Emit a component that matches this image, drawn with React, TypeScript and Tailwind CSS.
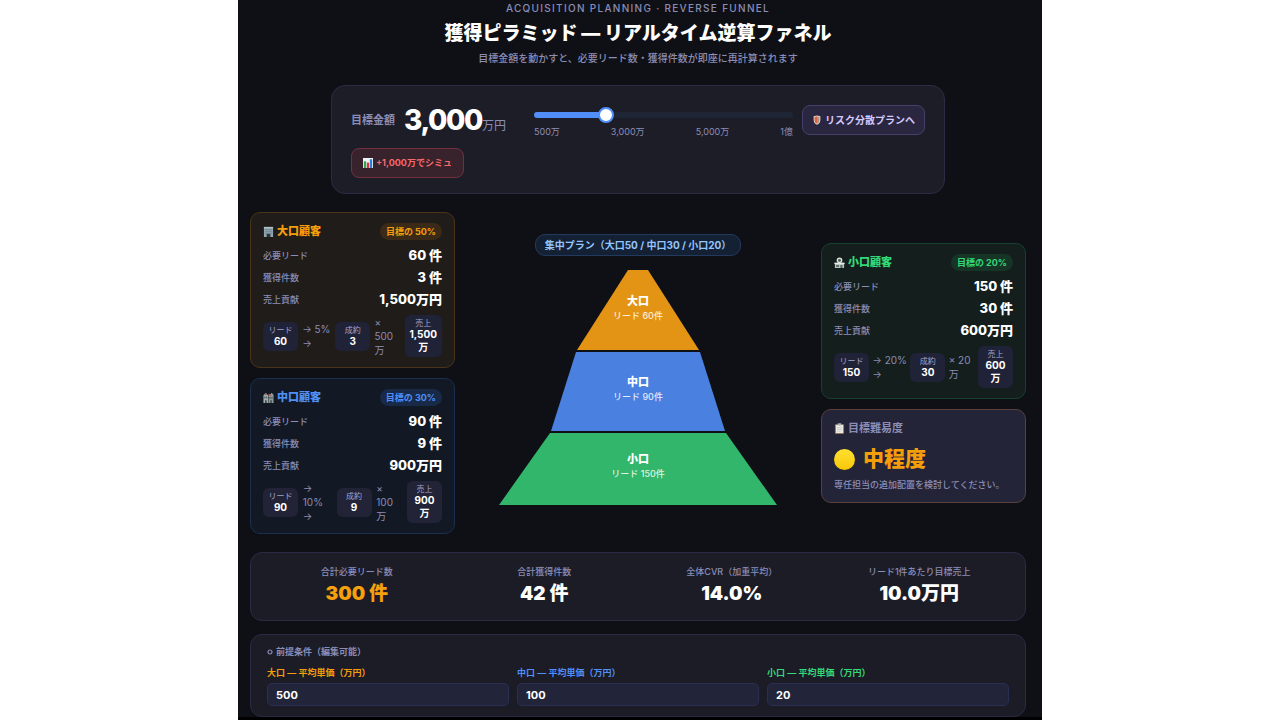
import { useState } from "react";
import type { ReactNode } from "react";

type Segment = {
  id: "large" | "mid" | "small";
  name: string;
  share: number;
  cvr: number;
  card: string;
  text: string;
  badge: string;
  chip: string;
  icon: ReactNode;
};

const BuildingIcon = () => (
  <svg viewBox="0 0 12 12" className="size-[11px] shrink-0" aria-hidden="true">
    <rect x="1" y="1" width="10" height="11" fill="#8fa3ae" />
    <rect x="1" y="1" width="10" height="1.5" fill="#b4c2c9" />
    <g fill="#748a96">
      <rect x="2.2" y="3.4" width="7.6" height="1" />
      <rect x="2.2" y="5.4" width="7.6" height="1" />
      <rect x="2.2" y="7.4" width="7.6" height="1" />
    </g>
    <rect x="4" y="8.6" width="4" height="3.4" fill="#2c343a" />
  </svg>
);

const OfficesIcon = () => (
  <svg viewBox="0 0 12 12" className="size-[11px] shrink-0" aria-hidden="true">
    <path d="M.5 3.5 3 1l2.5 2.5V12h-5z" fill="#a3aeb0" />
    <path d="M6 2.5h2L9.5.8 11.5 3v9H6z" fill="#8b9997" />
    <rect x="2" y="1.6" width="1.8" height="1.8" fill="#c6503f" />
    <rect x="7.2" y="3" width="1.4" height="1.4" fill="#c6503f" />
    <g fill="#3d4a4c">
      <rect x="1.5" y="5" width="1.1" height="2" />
      <rect x="3.5" y="5" width="1.1" height="2" />
      <rect x="7" y="5.5" width="1.1" height="1.8" />
      <rect x="9.2" y="5.5" width="1.1" height="1.8" />
      <rect x="2.2" y="9" width="1.8" height="3" />
      <rect x="8" y="9" width="1.6" height="3" />
    </g>
  </svg>
);

const ShopIcon = () => (
  <svg viewBox="0 0 12 12" className="size-[11px] shrink-0" aria-hidden="true">
    <circle cx="6" cy="3.6" r="3.1" fill="#d8dedb" />
    <circle cx="6" cy="3.8" r="1.5" fill="#3d5a4a" />
    <path d="M1 6.4h10V12H1z" fill="#b9c2be" />
    <path d="M.4 6.2h11.2v1.6H.4z" fill="#e6eae8" />
    <rect x="2.4" y="8.8" width="3" height="2" fill="#4f6a5c" />
    <rect x="7" y="8.8" width="2.2" height="3.2" fill="#4f6a5c" />
  </svg>
);

const ChartIcon = () => (
  <svg viewBox="0 0 12 12" className="size-[10px] shrink-0" aria-hidden="true">
    <rect width="12" height="12" fill="#eef2f5" />
    <rect x="1" y="4" width="2.8" height="8" fill="#2fa84f" />
    <rect x="4.6" y="5.5" width="2.8" height="6.5" fill="#d9363e" />
    <rect x="8.2" y="1.5" width="2.8" height="10.5" fill="#2f7fd6" />
  </svg>
);

const ShieldIcon = () => (
  <svg viewBox="0 0 12 12" className="size-[10px] shrink-0" aria-hidden="true">
    <path d="M6 .5 10 1.500v4.500c0 3-1.800 4.800-4 5.700C3.800 10.800 2 9 2 6V1.500z" fill="#e9dfd8" />
    <path d="M6 1.600v9C4.200 9.800 3 8.300 3 6V2.400z" fill="#e0623a" />
    <path d="M6 1.600v9c1.800-.8 3-2.300 3-4.600V2.400z" fill="#a8948c" />
  </svg>
);

const ClipboardIcon = () => (
  <svg viewBox="0 0 12 12" className="size-[11px] shrink-0" aria-hidden="true">
    <rect x="1" y="1" width="10" height="11" rx="1" fill="#8a6a4e" />
    <rect x="2" y="2.2" width="8" height="8.8" fill="#eceae6" />
    <rect x="4" y=".2" width="4" height="2.4" rx=".6" fill="#a9b0b6" />
    <path d="M3.2 5h5.6M3.2 7h5.6M3.2 9h4" stroke="#b9b6b0" strokeWidth=".6" />
  </svg>
);

const SEGMENTS: Segment[] = [
  {
    id: "large",
    name: "大口",
    share: 50,
    cvr: 5,
    card: "border-[#4a3418] bg-[#1f1c19]",
    text: "text-[#f59e0b]",
    badge: "bg-[#3a2a17] text-[#f59e0b]",
    chip: "bg-[#202238]",
    icon: <BuildingIcon />,
  },
  {
    id: "mid",
    name: "中口",
    share: 30,
    cvr: 10,
    card: "border-[#1a2f4d] bg-[#131924]",
    text: "text-[#4f8ff7]",
    badge: "bg-[#182a47] text-[#4f8ff7]",
    chip: "bg-[#222336]",
    icon: <OfficesIcon />,
  },
  {
    id: "small",
    name: "小口",
    share: 20,
    cvr: 20,
    card: "border-[#174030] bg-[#141e1c]",
    text: "text-[#34d977]",
    badge: "bg-[#173527] text-[#34d977]",
    chip: "bg-[#202238]",
    icon: <ShopIcon />,
  },
];

const fmt = (n: number) => Math.round(n).toLocaleString("en-US");

function Chip({ label, value, tone }: { label: string; value: string; tone: string }) {
  return (
    <div className={`min-w-[35px] shrink-0 rounded-md px-[5px] py-[3px] text-center ${tone}`}>
      <div className="text-[8px] leading-[10px] text-[#a3a5cc]">{label}</div>
      <div className="text-[10px] leading-[13px] font-bold whitespace-pre-line text-white">{value}</div>
    </div>
  );
}

function SegmentCard({ seg, goal, price }: { seg: Segment; goal: number; price: number }) {
  const sales = (goal * seg.share) / 100;
  const deals = Math.ceil(sales / price);
  const leads = Math.ceil((deals * 100) / seg.cvr);
  const rows = [
    ["必要リード", `${fmt(leads)} 件`],
    ["獲得件数", `${fmt(deals)} 件`],
    ["売上貢献", `${fmt(sales)}万円`],
  ];
  // the mid card stacks its arrows around the rate
  const rate = seg.id === "mid" ? `→\n${seg.cvr}%\n→` : `→ ${seg.cvr}%\n→`;
  const unit = seg.id === "small" ? `× ${price}\n万` : `×\n${price}\n万`;

  return (
    <section className={`rounded-[10px] border px-3 pt-[9px] pb-[10px] ${seg.card}`}>
      <div className="flex h-[18px] items-center justify-between">
        <h2 className={`flex items-center gap-[3px] text-[11px] font-black ${seg.text}`}>
          {seg.icon}
          {seg.name}顧客
        </h2>
        <span className={`rounded-full px-[6px] text-[9px] leading-[17px] font-bold ${seg.badge}`}>
          目標の {seg.share}%
        </span>
      </div>
      <dl className="mt-[5px] mb-1">
        {rows.map(([k, v]) => (
          <div key={k} className="flex h-[22px] items-center justify-between">
            <dt className="text-[9px] font-medium text-[#8b8db6]">{k}</dt>
            <dd className="text-[13px] font-extrabold text-white">{v}</dd>
          </div>
        ))}
      </dl>
      <div className="flex h-[42px] items-center justify-between text-[10px] leading-[14px] text-[#8b8db6]">
        <Chip label="リード" value={fmt(leads)} tone={seg.chip} />
        <span className="min-w-[29px] whitespace-pre-line">{rate}</span>
        <Chip label="成約" value={fmt(deals)} tone={seg.chip} />
        <span className="min-w-[26px] whitespace-pre-line">{unit}</span>
        <Chip label="売上" value={`${fmt(sales)}\n万`} tone={seg.chip} />
      </div>
    </section>
  );
}

function Pyramid({ leads }: { leads: number[] }) {
  return (
    <svg viewBox="0 0 278 235" className="w-full max-w-[278px]" role="img" aria-label="獲得ピラミッド">
      <polygon points="129,0 149,0 200,80 78,80" fill="#e39414" />
      <polygon points="77,82 201,82 226,161 52,161" fill="#4a80df" />
      <polygon points="51,163 227,163 278,235 0,235" fill="#31b66b" />
      <g fill="#fff" textAnchor="middle">
        <g className="text-[11px] font-black">
          <text x="139" y="35">大口</text>
          <text x="139" y="116">中口</text>
          <text x="139" y="193">小口</text>
        </g>
        <g className="text-[9px] font-medium" fillOpacity="0.85">
          <text x="139" y="49">リード {leads[0]}件</text>
          <text x="139" y="130">リード {leads[1]}件</text>
          <text x="139" y="207">リード {leads[2]}件</text>
        </g>
      </g>
    </svg>
  );
}

export default function App() {
  const [goal, setGoal] = useState(3000);
  const [prices, setPrices] = useState([500, 100, 20]);

  const deals = SEGMENTS.map((s, i) => Math.ceil((goal * s.share) / 100 / (prices[i] || 1)));
  const leads = SEGMENTS.map((s, i) => Math.ceil((deals[i] * 100) / s.cvr));
  const totalLeads = leads.reduce((a, b) => a + b, 0);
  const totalDeals = deals.reduce((a, b) => a + b, 0);
  const pct = ((goal - 500) / 9500) * 100;

  const card = (i: number) => <SegmentCard seg={SEGMENTS[i]} goal={goal} price={prices[i] || 1} />;

  const totals = [
    { label: "合計必要リード数", value: `${fmt(totalLeads)} 件`, tone: "text-[#f5a00c]" },
    { label: "合計獲得件数", value: `${fmt(totalDeals)} 件`, tone: "text-white" },
    { label: "全体CVR（加重平均）", value: `${((totalDeals / totalLeads) * 100).toFixed(1)}%`, tone: "text-white" },
    { label: "リード1件あたり目標売上", value: `${(goal / totalLeads).toFixed(1)}万円`, tone: "text-white" },
  ];

  return (
    <div className="min-h-screen bg-white font-[Inter,'Noto_Sans_CJK_JP',sans-serif]">
      <main className="mx-auto min-h-screen max-w-[804px] bg-black">
        <div className="bg-[#0f1015] pr-4 pl-3">
          <header className="text-center">
            <p className="text-[10px] leading-4 font-medium tracking-[0.13em] text-[#8b8db6]">
              ACQUISITION PLANNING · REVERSE FUNNEL
            </p>
            <h1 className="mt-1 text-[19px] leading-7 font-black text-white">
              獲得ピラミッド — リアルタイム逆算ファネル
            </h1>
            <p className="mt-[2px] text-[10px] leading-4 font-medium text-[#8b8db6]">
              目標金額を動かすと、必要リード数・獲得件数が即座に再計算されます
            </p>
          </header>

          <section className="mx-auto mt-[19px] flex max-w-[614px] flex-wrap items-center gap-x-[9px] gap-y-[10px] rounded-[14px] border border-[#2b2b45] bg-[#1d1d28] px-[19px] pt-4 pb-[15px]">
            <label htmlFor="goal" className="text-[11px] font-semibold text-[#8b8db6]">
              目標金額
            </label>
            <p className="flex h-9 min-w-[121px] items-baseline text-[28px] leading-9 font-extrabold tracking-tighter text-white">
              {fmt(goal)}
              <span className="text-[12px] font-normal tracking-normal text-[#8b8db6]">万円</span>
            </p>
            <div className="min-w-[200px] flex-1 pt-[10px]">
              <input
                id="goal"
                type="range"
                min={500}
                max={10000}
                step={100}
                value={goal}
                onChange={(e) => setGoal(Number(e.target.value))}
                className="block h-[6px] w-full cursor-pointer appearance-none rounded-full [&::-webkit-slider-thumb]:size-4 [&::-webkit-slider-thumb]:appearance-none [&::-webkit-slider-thumb]:rounded-full [&::-webkit-slider-thumb]:border-2 [&::-webkit-slider-thumb]:border-[#4f8ff7] [&::-webkit-slider-thumb]:bg-white"
                style={{ background: `linear-gradient(to right, #4f8ff7 ${pct}%, #1e2636 ${pct}%)` }}
              />
              <div className="mt-2 flex justify-between text-[9px] leading-3 text-[#8b8db6]">
                <span>500万</span>
                <span>3,000万</span>
                <span>5,000万</span>
                <span>1億</span>
              </div>
            </div>
            <button
              type="button"
              className="flex h-[30px] items-center gap-[3px] rounded-lg border border-[#45406b] bg-[#2a2640] px-[9px] text-[10px] font-bold text-[#d5c8fb]"
            >
              <ShieldIcon />
              リスク分散プランへ
            </button>
            <button
              type="button"
              onClick={() => setGoal((g) => Math.min(10000, g + 1000))}
              className="flex h-[30px] items-center gap-[3px] rounded-lg border border-[#70313c] bg-[#38222c] px-[11px] text-[9px] font-bold text-[#f8696b]"
            >
              <ChartIcon />
              +1,000万でシミュ
            </button>
          </section>

          <div className="mt-[18px] grid grid-cols-[205px_1fr_205px] items-center">
            <div className="flex flex-col gap-[10px]">
              {card(0)}
              {card(1)}
            </div>

            <div className="flex flex-col items-center gap-[14px] pb-2">
              <p className="rounded-[10px] border border-[#213a5e] bg-[#142033] px-[9px] text-[10px] leading-5 font-bold text-[#93c5fd]">
                集中プラン（大口50 / 中口30 / 小口20）
              </p>
              <Pyramid leads={leads} />
            </div>

            <div className="flex flex-col gap-[10px]">
              {card(2)}
              <section className="rounded-[10px] border border-[#5a4038] bg-[#232438] px-3 py-[9px]">
                <h2 className="flex h-[18px] items-center gap-[3px] text-[11px] font-semibold text-[#8b8db6]">
                  <ClipboardIcon />
                  目標難易度
                </h2>
                <p className="mt-2 flex items-center gap-2 text-[21px] leading-7 font-black text-[#f59e0b]">
                  <span className="size-[21px] rounded-full bg-linear-to-b from-[#ffe02e] to-[#f7c800]" />
                  中程度
                </p>
                <p className="mt-1 text-[9px] leading-4 font-medium text-[#8b8db6]">
                  専任担当の追加配置を検討してください。
                </p>
              </section>
            </div>
          </div>

          <dl className="mt-[18px] flex rounded-[12px] border border-[#292b45] bg-[#1c1c27] px-3 pt-[11px] pb-3 text-center">
            {totals.map((t) => (
              <div key={t.label} className="flex-1">
                <dt className="text-[9px] leading-4 font-medium text-[#8b8db6]">{t.label}</dt>
                <dd className={`text-[19px] leading-7 font-black ${t.tone}`}>{t.value}</dd>
              </div>
            ))}
          </dl>

          <section className="mt-[13px] rounded-[12px] border border-[#292b45] bg-[#1c1c27] px-4 pt-[9px] pb-[10px]">
            <h2 className="flex items-center gap-[3px] text-[9px] leading-4 font-bold text-[#8b8db6]">
              <svg viewBox="0 0 6 6" className="size-[6px]" aria-hidden="true">
                <circle cx="3" cy="3" r="2" fill="none" stroke="#8b8db6" strokeWidth="1.2" />
              </svg>
              前提条件（編集可能）
            </h2>
            <div className="mt-[6px] grid grid-cols-3 gap-2">
              {SEGMENTS.map((s, i) => (
                <label key={s.id} className={`block text-[9px] leading-[14px] font-semibold ${s.text}`}>
                  {s.name} — 平均単価（万円）
                  <input
                    type="text"
                    inputMode="numeric"
                    value={prices[i]}
                    onChange={(e) => {
                      const next = [...prices];
                      next[i] = Number(e.target.value) || 0;
                      setPrices(next);
                    }}
                    className="mt-[3px] block h-[23px] w-full rounded-[5px] border border-[#2a2e52] bg-[#22243a] px-2 text-[11px] font-bold text-white"
                  />
                </label>
              ))}
            </div>
          </section>
        </div>
      </main>
    </div>
  );
}
